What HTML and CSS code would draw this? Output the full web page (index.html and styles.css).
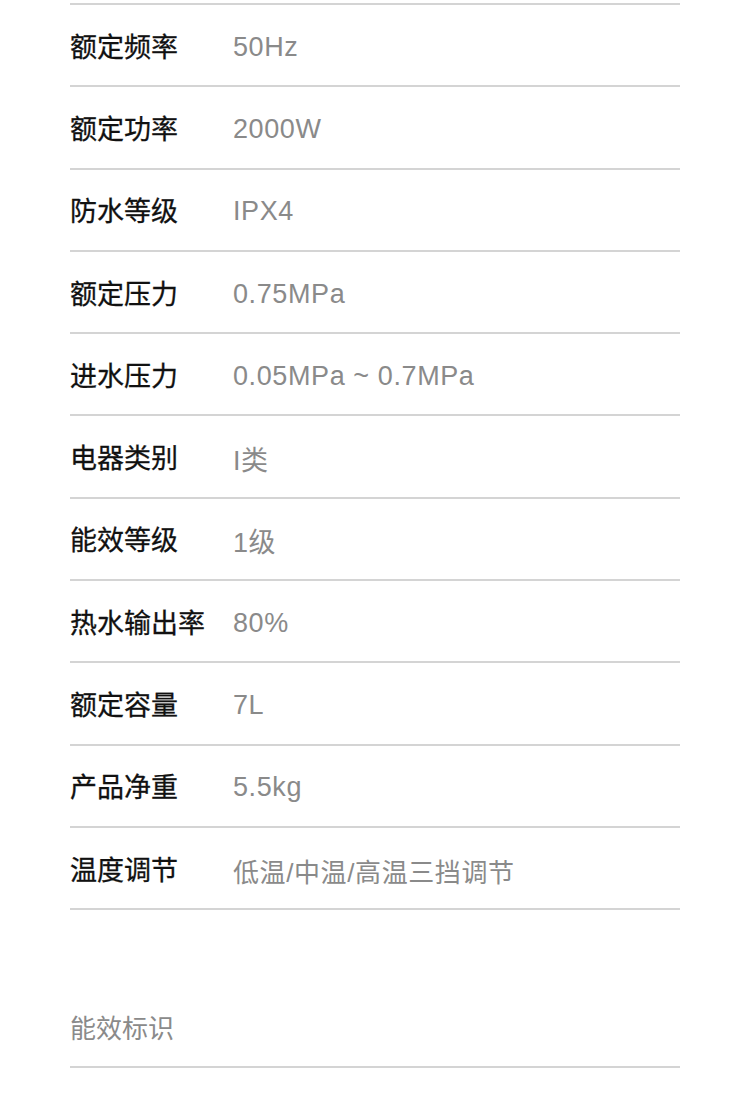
FILE: index.html
```html
<!DOCTYPE html>
<html lang="zh-CN">
<head>
<meta charset="utf-8">
<link rel="stylesheet" href="styles.css">
</head>
<body>
<div class="page">
  <div class="specs">
    <div class="row"><span class="label">额定频率</span><span class="value">50Hz</span></div>
    <div class="row"><span class="label">额定功率</span><span class="value">2000W</span></div>
    <div class="row"><span class="label">防水等级</span><span class="value">IPX4</span></div>
    <div class="row"><span class="label">额定压力</span><span class="value">0.75MPa</span></div>
    <div class="row"><span class="label">进水压力</span><span class="value">0.05MPa ~ 0.7MPa</span></div>
    <div class="row"><span class="label">电器类别</span><span class="value">I类</span></div>
    <div class="row"><span class="label">能效等级</span><span class="value">1级</span></div>
    <div class="row"><span class="label">热水输出率</span><span class="value">80%</span></div>
    <div class="row"><span class="label">额定容量</span><span class="value">7L</span></div>
    <div class="row"><span class="label">产品净重</span><span class="value">5.5kg</span></div>
    <div class="row"><span class="label">温度调节</span><span class="value value-cjk">低温/中温/高温三挡调节</span></div>
  </div>
  <div class="section-title">能效标识</div>
</div>
</body>
</html>
```

FILE: styles.css
```css
html, body {
  margin: 0;
  padding: 0;
  background: #ffffff;
}

.page {
  width: 610px;
  margin-left: 70px;
  padding-top: 3px;
  font-family: "Liberation Sans", "Noto Sans CJK SC", sans-serif;
}

.specs {
  border-top: 2px solid #d4d4d4;
}

.row {
  display: flex;
  align-items: center;
  height: 80.3px;
  border-bottom: 2px solid #d4d4d4;
}

.label {
  width: 163px;
  flex: none;
  font-family: "Noto Sans CJK SC", sans-serif;
  font-size: 27px;
  font-weight: 400;
  color: #111111;
  -webkit-text-stroke: 0.3px #111111;
}

.value {
  padding-top: 4px;
  font-size: 27px;
  color: #8a8a8a;
  letter-spacing: 0.6px;
}

.value-cjk {
  font-size: 26px;
}

.section-title {
  margin-top: 76px;
  height: 80px;
  display: flex;
  align-items: center;
  border-bottom: 2px solid #d4d4d4;
  font-family: "Noto Sans CJK SC", sans-serif;
  font-size: 26px;
  color: #8a8a8a;
}
```
